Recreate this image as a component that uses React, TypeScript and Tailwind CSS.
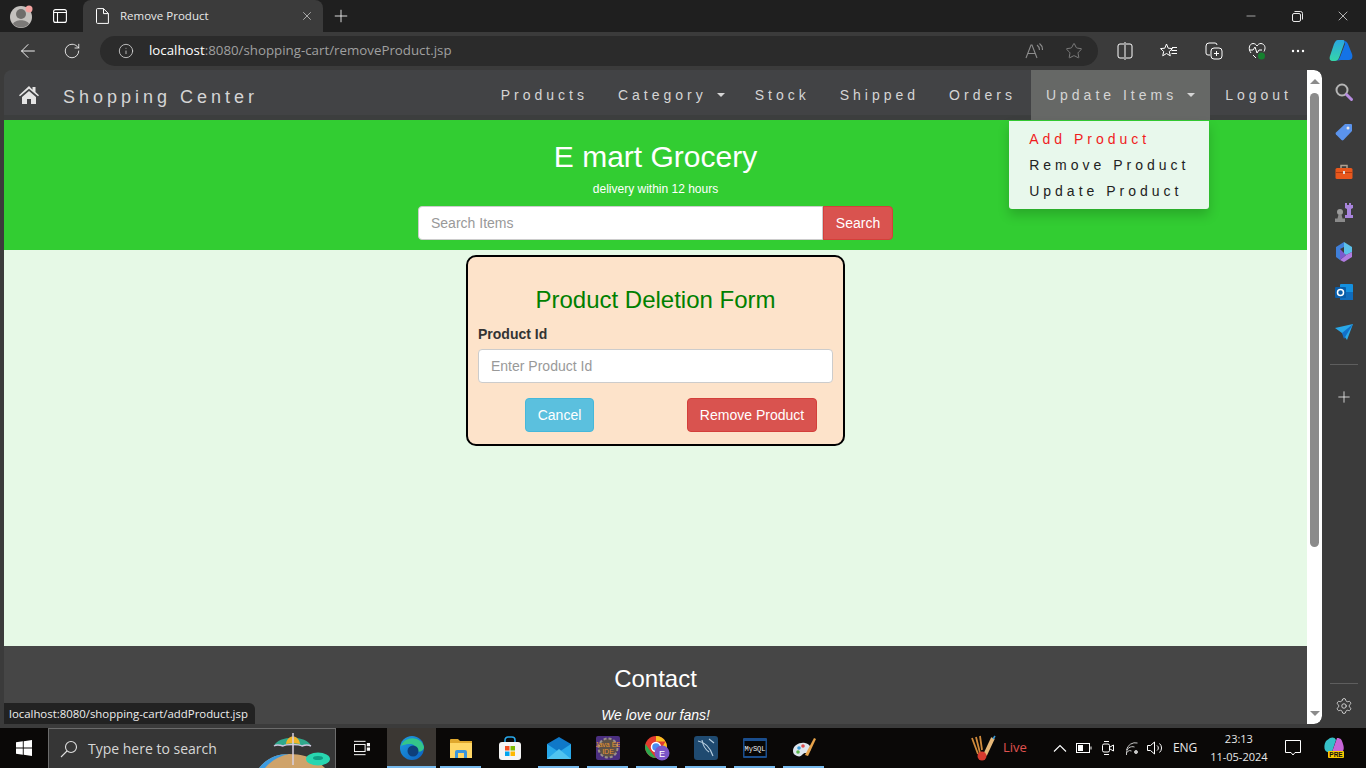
import { ArrowLeft, Info, Minus, Plus, RotateCw, Settings, Star, X } from "lucide-react";

function Caret() {
  return <span className="ml-[10px] inline-block h-0 w-0 border-x-4 border-t-4 border-x-transparent border-t-[#d5d5d5] align-middle" />;
}

function NavLink({ label, caret }: { label: string; caret?: boolean }) {
  return (
    <li className="relative flex h-[50px] items-center px-[15px] pb-[1px]">
      <span className="whitespace-pre text-[14px] leading-5 tracking-[4px] text-[#d5d5d5]">{label}</span>
      {caret && <Caret />}
    </li>
  );
}

function Profile() {
  return (
    <svg width="24" height="24" viewBox="0 0 24 24">
      <circle cx="11" cy="13" r="11" fill="#c4c1be" />
      <circle cx="11" cy="10" r="5" fill="#6f6d6b" />
      <path d="M3 20c2-5 14-5 16 0a11 11 0 0 1-16 0z" fill="#7b7977" />
      <circle cx="19" cy="5" r="3.500" fill="#f4a3a0" />
    </svg>
  );
}

function Toolbar() {
  return (
    <div className="flex h-[38px] shrink-0 items-center bg-[#3b3b3b] text-white">
      <div className="flex w-[100px] shrink-0 items-center">
        <ArrowLeft size={22} strokeWidth={1} className="ml-[17px]" />
        <RotateCw size={18} strokeWidth={1.100} className="ml-[24px]" />
      </div>
      <div className="flex h-[30px] w-[998px] shrink-0 items-center rounded-full bg-[#2b2b2b] pr-[15px]">
        <Info size={16} strokeWidth={1.200} className="ml-[18px] text-[#dcdcdc]" />
        <span className="ml-[15px] font-['Open_Sans',sans-serif] text-[13.300px] text-[#a0a0a0]">
          <span className="text-white">localhost</span>:8080/shopping-cart/removeProduct.jsp
        </span>
        <div className="ml-auto flex items-center gap-[22px] text-[#8c8c8c]">
          <svg width="18" height="18" viewBox="0 0 18 18" fill="none" stroke="currentColor" strokeWidth="1.100">
            <path d="M1 16 6 3h1l5 13M3 11.500h7M12 3c1.500 1 2.500 3 2.500 5M14.500 1.500c2 1.500 3 4 3 6.500" />
          </svg>
          <Star size={18} strokeWidth={1.100} />
        </div>
      </div>
      <div className="flex flex-1 items-center">
        <svg className="ml-[19px]" width="16" height="18" viewBox="0 0 16 18" fill="none" stroke="#fff" strokeWidth="1">
          <path d="M7 2H3a2 2 0 0 0-2 2v10a2 2 0 0 0 2 2h4M9 2h4a2 2 0 0 1 2 2v10a2 2 0 0 1-2 2H9M8 0v18" />
        </svg>
        <svg className="ml-[27px]" width="18" height="18" viewBox="0 0 18 18" fill="none" stroke="#fff" strokeWidth="1">
          <path d="M6.500 2 8.200 6.200 12.500 6.600 9.300 9.500 10.300 13.800 6.500 11.500 2.700 13.800 3.700 9.500 0.500 6.600 4.800 6.200z M11.500 8.500h5.500M11.500 11.500h5.500M12 5.500h5" />
        </svg>
        <svg className="ml-[27px]" width="18" height="18" viewBox="0 0 18 18" fill="none" stroke="#fff" strokeWidth="1">
          <path d="M5 13H3a2 2 0 0 1-2-2V4a3 3 0 0 1 3-3h6a2 2 0 0 1 2 2" />
          <rect x="6" y="6" width="11" height="11" rx="3" />
          <path d="M11.500 9v5M9 11.500h5" />
        </svg>
        <svg className="ml-[25px]" width="18" height="18" viewBox="0 0 18 18" fill="none" stroke="#fff" strokeWidth="1">
          <path d="M3 11C0 7 1 2 5 1.500c2 0 3 1 4 2.500 1-1.500 2-2.500 4-2.500 4 .5 5 4.500 3 8M1 8h4l2-3 2 6 2-3h3M5 13l3 3" />
          <circle cx="13.500" cy="14" r="3.500" fill="#16802f" stroke="none" />
        </svg>
        <svg className="ml-[25px]" width="14" height="4" viewBox="0 0 14 4" fill="#fff">
          <circle cx="2" cy="2" r="1.200" />
          <circle cx="7" cy="2" r="1.200" />
          <circle cx="12" cy="2" r="1.200" />
        </svg>
        <svg className="ml-[24px]" width="24" height="24" viewBox="0 0 24 24">
          <defs>
            <linearGradient id="cop1" x1="0" y1="0" x2="0" y2="1">
              <stop offset="0" stopColor="#2aa7e0" />
              <stop offset="1" stopColor="#35d6a8" />
            </linearGradient>
          </defs>
          <path d="M9 1h5c2 0 2 2 1 4L10 19c-1 2-2 3-4 3H4c-3 0-4-2-3-5L5 5c1-2 2-4 4-4z" fill="url(#cop1)" />
          <path d="M15 2c2 0 3 1 4 3l4 10c1 3 0 6-3 6h-8c-2 0-4 1-6 1 3 0 4-2 5-4l5-13z" fill="#1473e6" />
        </svg>
      </div>
    </div>
  );
}

function TabStrip() {
  return (
    <div className="flex h-8 shrink-0 items-end bg-[#1f1f1f] text-white">
      <div className="flex h-8 w-[83px] shrink-0 items-center">
        <span className="ml-[10px]">
          <Profile />
        </span>
        <svg className="ml-[19px]" width="14" height="14" viewBox="0 0 14 14" fill="none" stroke="#fff" strokeWidth="1.100">
          <rect x=".6" y=".6" width="12.800" height="12.800" rx="2" />
          <path d="M.6 3.500h12.800M4.500 3.500v10" />
        </svg>
      </div>
      <div className="flex h-8 w-[240px] shrink-0 items-center rounded-t-lg bg-[#3b3b3b]">
        <svg className="ml-[13px]" width="13" height="16" viewBox="0 0 13 16" fill="none" stroke="#fff" strokeWidth="1">
          <path d="M1.500.6h6L12.400 5.500V15.400H1.500a1 1 0 0 1-1-1V1.600a1 1 0 0 1 1-1zM7.500.6v5h4.900" />
        </svg>
        <span className="ml-[11px] font-['Open_Sans',sans-serif] text-[11.500px] text-[#e8e8e8]">Remove Product</span>
        <X size={14} strokeWidth={1.200} className="ml-auto mr-[9px] text-[#d8d8d8]" />
      </div>
      <div className="flex h-8 flex-1 items-center">
        <Plus size={20} strokeWidth={1} className="ml-[8px]" />
        <div className="ml-auto flex items-center">
          <div className="flex w-[46px] justify-center">
            <Minus size={14} strokeWidth={1} />
          </div>
          <div className="flex w-[46px] justify-center">
            <svg width="11" height="11" viewBox="0 0 11 11" fill="none" stroke="#fff" strokeWidth=".9">
              <rect x=".5" y="2.500" width="8" height="8" rx="1.500" />
              <path d="M2.500.5h6a2 2 0 0 1 2 2v6" />
            </svg>
          </div>
          <div className="flex w-[46px] justify-center">
            <X size={16} strokeWidth={1} />
          </div>
        </div>
      </div>
    </div>
  );
}

function Dropdown() {
  return (
    <ul className="absolute right-[1px] top-[51px] z-20 w-[200px] whitespace-nowrap rounded-b-[3px] bg-[#e8f8ec] py-[5px] text-[14px] leading-5 tracking-[4px] shadow-[0_6px_12px_rgba(0,0,0,0.18)]">
      <li className="px-5 py-[3px] text-[#f01c1c]">Add Product</li>
      <li className="px-5 py-[3px] text-[#222]">Remove Product</li>
      <li className="px-5 py-[3px] text-[#222]">Update Product</li>
    </ul>
  );
}

function Navbar() {
  return (
    <nav className="flex h-[50px] shrink-0 items-center bg-[linear-gradient(#424345_90%,#3c3e3e_90%)]">
      <svg className="ml-[15px]" width="20" height="18" viewBox="0 0 20 18" fill="#e4e4e4">
        <path d="M10 0 0 9.200l1 1L10 2.800l9 7.400 1-1-3.500-3.200V1h-3v2.700z" />
        <path d="M3 11 10 5l7 6v7h-5v-5H8v5H3z" />
      </svg>
      <span className="ml-[24px] pt-1 text-[18px] tracking-[4px] text-[#d5d5d5]">Shopping Center</span>
      <ul className="ml-auto flex">
        <NavLink label="Products" />
        <NavLink label="Category" caret />
        <NavLink label="Stock" />
        <NavLink label="Shipped" />
        <NavLink label="Orders" />
        <li className="relative flex h-[50px] items-center bg-[#666866] px-[15px] pb-[1px]">
          <span className="whitespace-pre text-[14px] leading-5 tracking-[4px] text-[#d5d5d5]">Update Items</span>
          <Caret />
          <Dropdown />
        </li>
        <NavLink label="Logout" />
      </ul>
    </nav>
  );
}

function Hero() {
  return (
    <header className="flex h-[130px] shrink-0 flex-col items-center bg-[#32cd32] text-white">
      <h1 className="mt-[19px] text-[30px] leading-[36px]">E mart Grocery</h1>
      <p className="mt-[6px] text-[12px] leading-[17px]">delivery within 12 hours</p>
      <form className="mt-[8px] flex w-[475px]">
        <input
          placeholder="Search Items"
          className="h-[34px] flex-1 rounded-l border border-[#ccc] bg-white px-3 text-[14px] placeholder:text-[#999]"
        />
        <button type="button" className="h-[34px] w-[70px] rounded-r border border-[#d43f3a] bg-[#d9534f] text-[14px] text-white">
          Search
        </button>
      </form>
    </header>
  );
}

function RemoveForm() {
  return (
    <form className="mx-auto mt-[5px] h-[191px] w-[379px] rounded-[10px] border-2 border-black bg-[#fde3ca] px-[10px]">
      <h2 className="mt-[30px] text-center text-[24px] leading-[26px] text-[#008000]">Product Deletion Form</h2>
      <label className="mt-[11px] block text-[14px] font-bold leading-5 text-[#333]">Product Id</label>
      <input
        placeholder="Enter Product Id"
        className="mt-[5px] h-[34px] w-[355px] rounded border border-[#ccc] bg-white px-3 text-[14px] placeholder:text-[#999]"
      />
      <div className="mt-[15px] flex">
        <button type="button" className="ml-[47px] h-[34px] w-[69px] rounded border border-[#46b8da] bg-[#5bc0de] text-[14px] text-white">
          Cancel
        </button>
        <button type="button" className="ml-[93px] h-[34px] w-[130px] rounded border border-[#d43f3a] bg-[#d9534f] text-[14px] text-white">
          Remove Product
        </button>
      </div>
    </form>
  );
}

function Scrollbar() {
  return (
    <div className="flex w-[15px] shrink-0 flex-col items-center rounded-r-lg bg-white">
      <span className="mt-[9px] h-0 w-0 border-x-[5px] border-b-[5px] border-x-transparent border-b-[#8b8b8b]" />
      <span className="mt-[9px] h-[454px] w-[9px] rounded-full bg-[#8b8b8b]" />
      <span className="mb-[8px] mt-auto h-0 w-0 border-x-[5px] border-t-[5px] border-x-transparent border-t-[#8b8b8b]" />
    </div>
  );
}

function Sidebar() {
  const slot = "flex h-10 items-center justify-center";
  return (
    <aside className="flex w-11 shrink-0 flex-col items-center pt-[2px] text-[#e4e4e4]">
      <div className={slot}>
        <svg width="20" height="20" viewBox="0 0 20 20" fill="none">
          <circle cx="8" cy="8" r="5.500" stroke="#b5b5b5" strokeWidth="2" />
          <path d="m12.500 12.500 5 5" stroke="#b78ce0" strokeWidth="3" strokeLinecap="round" />
        </svg>
      </div>
      <div className={slot}>
        <svg width="18" height="18" viewBox="0 0 18 18">
          <path d="M10 1h6a1 1 0 0 1 1 1v6l-8.500 9a1.500 1.500 0 0 1-2 0L1 11.500a1.500 1.500 0 0 1 0-2z" fill="#5b93ec" />
          <circle cx="13" cy="5" r="1.500" fill="#e6e6e6" />
        </svg>
      </div>
      <div className={slot}>
        <svg width="18" height="16" viewBox="0 0 18 16">
          <path d="M6 4V1.500h6V4" fill="none" stroke="#b0a090" strokeWidth="1.500" />
          <rect x="0.500" y="4" width="17" height="11" rx="1.500" fill="#e8571c" />
          <rect x="0.500" y="8" width="17" height="1" fill="#b23c10" />
          <rect x="8" y="7" width="2" height="3" fill="#ddd" />
        </svg>
      </div>
      <div className={slot}>
        <svg width="20" height="20" viewBox="0 0 20 20">
          <path d="M11 1h2v2h2V1h2v2h2V1v5l-2 1v6h2v3h-8v-3h2V7l-2-1z" fill="#a884dc" />
          <circle cx="6" cy="10" r="3" fill="#9a9a9a" />
          <path d="M4.500 12.500h3l1 4h-5zM1 16.500h10V20H1z" fill="#8a8a8a" />
        </svg>
      </div>
      <div className={slot}>
        <svg width="18" height="20" viewBox="0 0 18 20">
          <path d="M9 0 1 5v10l4 3V7l4-2z" fill="#3f7fd9" />
          <path d="M9 0l8 5v5l-6 3-2-1V5z" fill="#5bbfe8" />
          <path d="M17 10v5l-8 5-4-2 6-5z" fill="#b07be0" />
          <path d="M5 7l6 6-6 5z" fill="#7a5ad0" />
        </svg>
      </div>
      <div className={slot}>
        <svg width="18" height="18" viewBox="0 0 18 18">
          <rect x="5" y="1" width="13" height="16" rx="1" fill="#1490df" />
          <rect x="5" y="9" width="13" height="8" fill="#0f6cbd" />
          <rect x="0" y="4" width="11" height="11" rx="1" fill="#0a5da8" />
          <circle cx="5.500" cy="9.500" r="3" fill="none" stroke="#fff" strokeWidth="1.500" />
        </svg>
      </div>
      <div className={slot}>
        <svg width="18" height="16" viewBox="0 0 18 16">
          <path d="M0 4 18 0 12 16 7 9z" fill="#29a8e8" />
          <path d="M7 9 18 0 9 15z" fill="#1270c8" />
        </svg>
      </div>
      <div className="mt-3 h-px w-7 bg-[#5e5e5e]" />
      <Plus size={18} strokeWidth={1} className="mt-[23px] text-white" />
      <div className="mt-auto h-px w-7 bg-[#5e5e5e]" />
      <Settings size={18} strokeWidth={1.100} className="mb-[13px] mt-[13px]" />
    </aside>
  );
}

function TaskIcon({ children, open, active }: { children: React.ReactNode; open?: boolean; active?: boolean }) {
  return (
    <div className={`relative flex h-10 w-[49px] shrink-0 items-center justify-center ${active ? "bg-[#3b3733]" : ""}`}>
      {children}
      {open && <span className={`absolute bottom-0 h-[2px] bg-[#76b9ed] ${active ? "inset-x-0" : "inset-x-1"}`} />}
    </div>
  );
}

function Taskbar() {
  return (
    <footer className="flex h-10 shrink-0 items-center bg-[#0a0807] font-['Open_Sans',sans-serif] text-white">
      <div className="flex h-10 w-12 shrink-0 items-center justify-center">
        <svg width="16" height="16" viewBox="0 0 16 16" fill="#fff">
          <path d="M0 2.300 6.800 1.300V7.500H0zM7.700 1.200 16 0V7.500H7.700zM0 8.400H6.800V14.700L0 13.700zM7.700 8.400H16V16L7.700 14.800z" />
        </svg>
      </div>
      <div className="flex h-10 w-[288px] shrink-0 items-center overflow-hidden border border-b-0 border-[#6b6b6b] bg-[#363636]">
        <svg className="ml-[11px]" width="18" height="18" viewBox="0 0 18 18" fill="none" stroke="#e0e0e0" strokeWidth="1.100">
          <circle cx="11" cy="7" r="5.500" />
          <path d="M7 11 1 17" />
        </svg>
        <span className="ml-[10px] text-[14px] text-[#d6d6d6]">Type here to search</span>
        <svg className="ml-auto" width="80" height="39" viewBox="0 0 80 39">
          <path d="M4 39c8-10 18-14 30-14 14 0 26 4 36 14z" fill="#cfa36a" />
          <path d="M4 39c8-10 18-14 30-14-10 2-18 7-24 14z" fill="#3d9be0" />
          <path d="M19 17C23 6 52 6 56 17c-4-2-6-1-9 0-3-2-16-2-19 0-3-1-5-2-9 0z" fill="#2fa98c" />
          <path d="M31 15c1-10 13-10 14 0-4-1-9-1-14 0z" fill="#f0b429" />
          <path d="M19 17c3-2 6-1 9 0 3-2 16-2 19 0 3-1 5-2 9 0" fill="none" stroke="#cfc8e0" strokeWidth="1.500" />
          <path d="M38 4v32" stroke="#d8d0e0" strokeWidth="1.500" />
          <ellipse cx="63" cy="30" rx="12" ry="6.500" fill="#28d6b0" />
          <ellipse cx="63" cy="29" rx="5" ry="2" fill="#0f9e84" />
        </svg>
      </div>
      <div className="flex h-10 w-[51px] shrink-0 items-center justify-center">
        <svg width="16" height="16" viewBox="0 0 18 16" fill="none" stroke="#fff" strokeWidth="1.100">
          <path d="M0 .5h13M0 15.500h13" />
          <rect x=".5" y="4" width="12" height="8" />
          <rect x="15" y="3" width="2.500" height="2.500" fill="#fff" />
          <rect x="15" y="8" width="2.500" height="2.500" fill="#fff" />
        </svg>
      </div>
      <TaskIcon open active>
        <svg width="24" height="24" viewBox="0 0 24 24">
          <defs>
            <linearGradient id="edge1" x1="0" y1="0" x2="1" y2="1">
              <stop offset="0" stopColor="#1f9de0" />
              <stop offset="1" stopColor="#0c5fc0" />
            </linearGradient>
          </defs>
          <circle cx="12" cy="12" r="12" fill="url(#edge1)" />
          <path d="M1 10C4 0 21-1 24 11c0 5-7 6-9 3 2-3-1-6-5-6-5 0-9 2-9 2z" fill="#34c58a" />
          <circle cx="13" cy="15" r="5.500" fill="#0e3f7a" />
        </svg>
      </TaskIcon>
      <TaskIcon open>
        <svg width="22" height="20" viewBox="0 0 22 20">
          <path d="M0 2a1 1 0 0 1 1-1h7l2 2h12v17H0z" fill="#e0a82e" />
          <path d="M0 5h22v15H0z" fill="#ffd766" />
          <path d="M5 20v-6a2 2 0 0 1 2-2h8a2 2 0 0 1 2 2v6z" fill="#3a96dd" />
          <rect x="8" y="15" width="6" height="5" fill="#ffd766" />
        </svg>
      </TaskIcon>
      <TaskIcon>
        <svg width="24" height="24" viewBox="0 0 24 24">
          <path d="M7 7V4a3 3 0 0 1 3-3h4a3 3 0 0 1 3 3v3" fill="none" stroke="#28a8ea" strokeWidth="1.500" />
          <rect x="1" y="6" width="22" height="18" rx="3" fill="#f5f5f5" />
          <rect x="7" y="10" width="4.500" height="4.500" fill="#f25022" />
          <rect x="12.500" y="10" width="4.500" height="4.500" fill="#7fba00" />
          <rect x="7" y="15.500" width="4.500" height="4.500" fill="#00a4ef" />
          <rect x="12.500" y="15.500" width="4.500" height="4.500" fill="#ffb900" />
        </svg>
      </TaskIcon>
      <TaskIcon open>
        <svg width="24" height="22" viewBox="0 0 24 22">
          <path d="M0 7 12 0l12 7v15H0z" fill="#0f78c8" />
          <path d="M0 7l12 8 12-8v15H0z" fill="#28a8ea" />
          <path d="M0 22 12 12l12 10z" fill="#50c4f0" />
        </svg>
      </TaskIcon>
      <TaskIcon open>
        <svg width="24" height="24" viewBox="0 0 24 24">
          <rect width="24" height="24" rx="2" fill="#4b2f80" />
          <circle cx="12" cy="12" r="9.500" fill="#5c5048" stroke="#9a9088" strokeWidth="2" strokeDasharray="3 2" />
          <text x="12" y="11" textAnchor="middle" fontSize="7" fill="#e8952c" fontFamily="Liberation Sans">Java EE</text>
          <text x="12" y="18" textAnchor="middle" fontSize="7" fill="#e8952c" fontFamily="Liberation Sans">IDE</text>
        </svg>
      </TaskIcon>
      <TaskIcon open>
        <svg width="26" height="26" viewBox="0 0 26 26">
          <circle cx="12" cy="12" r="11" fill="#e33b2e" />
          <path d="M12 1a11 11 0 0 1 9.500 5.500H12z" fill="#f9c020" />
          <path d="M21.500 6.500A11 11 0 0 1 12 23l5-9z" fill="#f9c020" />
          <path d="M1.500 9 7 17l5 6A11 11 0 0 1 1.500 9z" fill="#2da94f" />
          <circle cx="12" cy="12" r="4.500" fill="#4a8cf0" stroke="#fff" strokeWidth="1.500" />
          <circle cx="18" cy="18" r="7.500" fill="#7b55c7" />
          <text x="18" y="21.500" textAnchor="middle" fontSize="9" fill="#fff" fontFamily="Liberation Sans">E</text>
        </svg>
      </TaskIcon>
      <TaskIcon open>
        <svg width="24" height="24" viewBox="0 0 24 24">
          <rect width="24" height="24" rx="3" fill="#1f4a70" />
          <path d="M4 5c6 1 12 6 15 15M8 4c1 6 4 10 7 12M15 3l5 4" fill="none" stroke="#b8cfe0" strokeWidth="1.100" />
        </svg>
      </TaskIcon>
      <TaskIcon open>
        <svg width="24" height="20" viewBox="0 0 24 20">
          <rect width="24" height="20" rx="1" fill="#1a4d8c" />
          <rect x="1.500" y="3" width="21" height="15" fill="#060606" />
          <text x="12" y="13" textAnchor="middle" fontSize="7" fill="#f0f0f0" fontFamily="Liberation Mono">MySQL</text>
        </svg>
      </TaskIcon>
      <TaskIcon open>
        <svg width="24" height="24" viewBox="0 0 24 24">
          <path d="M1 15C1 9 8 6 13 7c5 1 7 5 5 8s-5 1-7 3-3 3-6 2-4-3-4-5z" fill="#dde6ee" />
          <circle cx="7" cy="12" r="1.800" fill="#3a9ad9" />
          <circle cx="11" cy="10" r="1.800" fill="#e04f4f" />
          <circle cx="6" cy="16" r="1.800" fill="#5ab54b" />
          <path d="M13 19 22 2l2 1-8 17z" fill="#e8a34a" />
        </svg>
      </TaskIcon>
      <svg className="ml-[142px]" width="26" height="26" viewBox="0 0 26 26" fill="none">
        <path d="M2 3l6 16M6 2l4 16M10 1l2 14" stroke="#d08a3c" strokeWidth="1.800" />
        <path d="M23 3 15 20" stroke="#e8b878" strokeWidth="4" />
        <path d="M25 1l-2 3" stroke="#3a9ad9" strokeWidth="1.500" />
        <circle cx="12" cy="21" r="4.500" fill="#d83a2e" />
      </svg>
      <span className="ml-[7px] text-[13px] text-[#e0524f]">Live</span>
      <svg className="ml-[26px]" width="14" height="8" viewBox="0 0 14 8" fill="none" stroke="#fff" strokeWidth="1.100">
        <path d="m1 7.500 6-6 6 6" />
      </svg>
      <svg className="ml-[9px]" width="16" height="10" viewBox="0 0 16 10" fill="none" stroke="#fff">
        <rect x=".5" y=".5" width="13" height="9" />
        <rect x="2" y="2" width="5" height="6" fill="#fff" stroke="none" />
        <path d="M15 3.500v3" />
      </svg>
      <svg className="ml-[10px]" width="12" height="16" viewBox="0 0 12 16" fill="none" stroke="#fff">
        <rect x=".5" y="4" width="7" height="8" rx="1.500" />
        <path d="M8 7l3.500-2v6L8 9M2 1.500h5M2 14.500h5" />
      </svg>
      <svg className="ml-[12px]" width="14" height="14" viewBox="0 0 14 14" fill="none" stroke="#c8c8c8">
        <path d="M.5 9a9 9 0 0 1 11-7M.5 12a6 6 0 0 1 8-6M.5 14a3.500 3.500 0 0 1 5-4" />
        <circle cx="10" cy="11" r="1.500" fill="#c8c8c8" />
      </svg>
      <svg className="ml-[7px]" width="16" height="14" viewBox="0 0 16 14" fill="none" stroke="#fff">
        <path d="M.5 4.500h3L7.500 1v12l-4-3.500h-3zM10 4.500a3 3 0 0 1 0 5M12.500 2.500a6 6 0 0 1 0 9" />
      </svg>
      <span className="ml-[10px] w-6 text-[12px] text-[#e8e8e8]">ENG</span>
      <div className="ml-[13px] flex w-[58px] flex-col items-center text-[11px] leading-[18px] text-[#e8e8e8]">
        <span>23:13</span>
        <span className="whitespace-nowrap">11-05-2024</span>
      </div>
      <svg className="ml-[17px]" width="16" height="16" viewBox="0 0 16 16" fill="none" stroke="#fff">
        <path d="M.5.500h15v12h-5.500L8 15l-2-2.500H.5z" />
      </svg>
      <svg className="ml-[22px]" width="22" height="22" viewBox="0 0 22 22">
        <path d="M7 1c2-1 5-1 6 2l-4 12c-3 1-6 0-7-2s-1-6 1-9z" fill="#36c0c8" />
        <path d="M14 1c4 0 5 2 6 6 1 3 1 5 0 7-3 1-7 1-11 1z" fill="#c866d8" />
        <rect x="5" y="14" width="16" height="7" rx="1" fill="#f8c800" />
        <text x="13" y="20" textAnchor="middle" fontSize="6.500" fontWeight="700" fill="#111" fontFamily="Liberation Sans">PRE</text>
      </svg>
    </footer>
  );
}

export default function App() {
  return (
    <div className="flex h-[768px] w-[1366px] flex-col overflow-hidden bg-[#3b3b3b] font-['Liberation_Sans',Arial,sans-serif]">
      <TabStrip />
      <Toolbar />
      <div className="flex min-h-0 flex-1">
        <div className="relative ml-1 mb-1 flex w-[1318px] shrink-0 overflow-hidden rounded-t-lg rounded-br-lg">
          <div className="flex w-[1303px] shrink-0 flex-col">
            <Navbar />
            <Hero />
            <main className="h-[396px] shrink-0 bg-[#e6f9e6]">
              <RemoveForm />
            </main>
            <section className="flex flex-1 flex-col items-center bg-[#464646] text-white">
              <h3 className="mt-[20px] text-[24px] leading-[26px]">Contact</h3>
              <p className="mt-[13px] text-[14px] italic leading-5">We love our fans!</p>
            </section>
          </div>
          <Scrollbar />
          <div className="absolute bottom-0 left-0 z-10 flex h-[21px] items-center rounded-tr-md bg-[#222] pl-[5px] pr-[7px] font-['Open_Sans',sans-serif] text-[11.400px] text-[#eee]">
            localhost:8080/shopping-cart/addProduct.jsp
          </div>
        </div>
        <Sidebar />
      </div>
      <Taskbar />
    </div>
  );
}
